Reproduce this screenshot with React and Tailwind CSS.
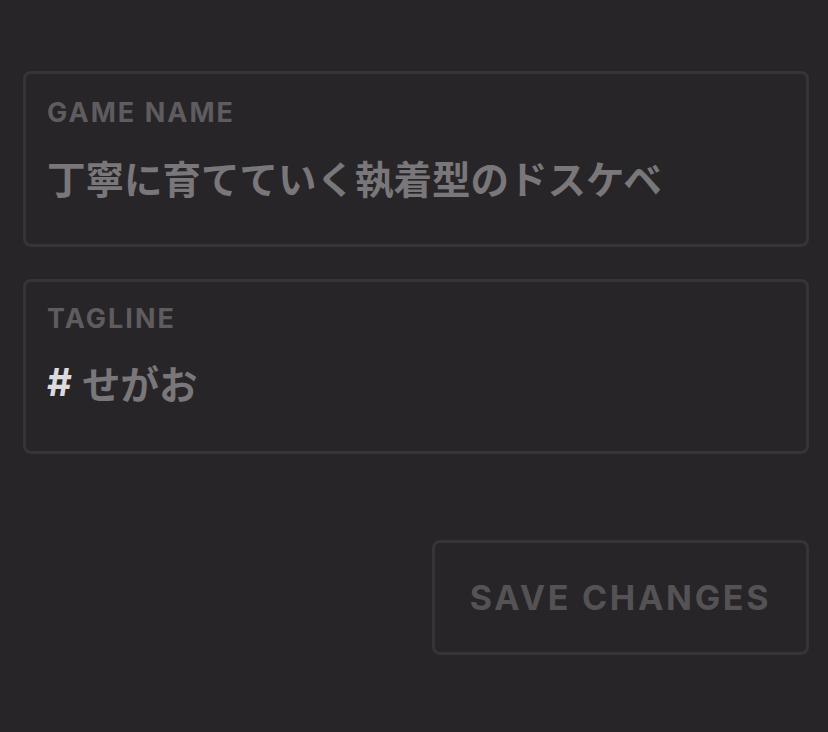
import React from "react";

export default function App() {
  return (
    <div className="w-[828px] h-[732px] bg-[#272528] pt-[71px] pl-[23px] pr-[19px] flex flex-col overflow-hidden" style={{ fontFamily: 'Inter, "Noto Sans CJK JP", sans-serif' }}>
      <div className="h-[176px] border-[3px] border-[#363437] rounded-[8px] pl-[21px] pt-[24px] flex flex-col">
        <div className="text-[27px] leading-[30px] font-bold tracking-[0.075em] text-[#5e5c5f]">GAME NAME</div>
        <div className="mt-[27px] text-[38.5px] leading-[44px] font-bold text-[#79777a]" style={{ fontFamily: '"Noto Sans CJK JP", sans-serif' }}>丁寧に育てていく執着型のドスケベ</div>
      </div>
      <div className="mt-[32px] h-[175px] border-[3px] border-[#363437] rounded-[8px] pl-[21px] pt-[22px] flex flex-col">
        <div className="text-[27px] leading-[30px] font-bold tracking-[0.075em] text-[#5e5c5f]">TAGLINE</div>
        <div className="mt-[26px] text-[38.5px] leading-[44px] font-bold text-[#79777a] flex items-center gap-[10px]" style={{ fontFamily: '"Noto Sans CJK JP", sans-serif' }}>
          <span className="font-bold text-[#dcdadd]" style={{ fontFamily: 'Inter, sans-serif' }}>#</span>
          <span>せがお</span>
        </div>
      </div>
      <div className="mt-[86px] flex justify-end">
        <div className="w-[377px] h-[115px] border-[3px] border-[#363437] rounded-[8px] flex items-center justify-center text-[34px] font-bold tracking-[0.08em] text-[#545255]">
          SAVE CHANGES
        </div>
      </div>
    </div>
  );
}
